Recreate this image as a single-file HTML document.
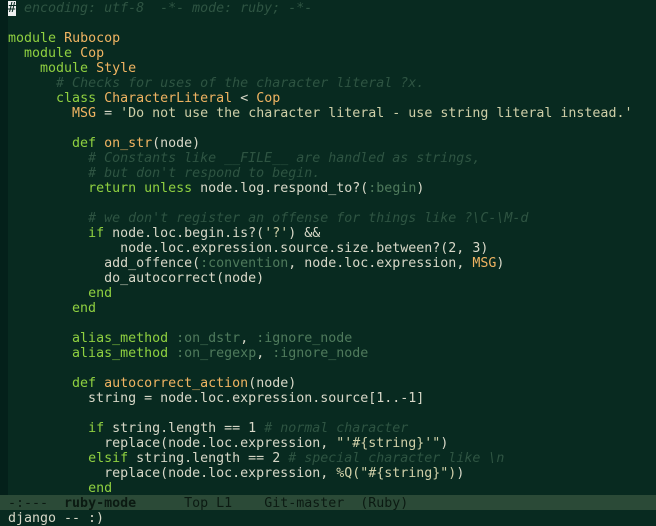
<!DOCTYPE html>
<html><head><meta charset="utf-8"><style>
html,body{margin:0;padding:0;width:656px;height:525px;overflow:hidden;background:#082a20;}
#fr{position:absolute;left:0;top:0;width:8px;height:495px;background:#04201a;}
pre{position:absolute;left:8px;top:1px;margin:0;font-family:"DejaVu Sans Mono","Liberation Mono",monospace;font-size:13.3px;line-height:15px;color:#d8d8c8;white-space:pre;}
.k{color:#8fd040}.f{color:#f0b462}.c{color:#2e5442;font-style:italic}.s{color:#cfcfa8}.y{color:#4f7a5c}
.cur{background:#f0f0f0;color:#082a20}
#ml{position:absolute;left:0;top:495px;width:656px;height:15px;background:#2b4a37;}
#ml pre{left:8px;top:1px;color:#0b1a12}
#mb{position:absolute;left:8px;top:511px;}
</style></head><body>
<div id="fr"></div>
<pre><span class="cur">#</span><span class="c"> encoding: utf-8  -*- mode: ruby; -*-</span>

<span class="k">module</span> <span class="f">Rubocop</span>
  <span class="k">module</span> <span class="f">Cop</span>
    <span class="k">module</span> <span class="f">Style</span>
      <span class="c"># Checks for uses of the character literal ?x.</span>
      <span class="k">class</span> <span class="f">CharacterLiteral</span> &lt; <span class="f">Cop</span>
        <span class="f">MSG</span> = <span class="s">'Do not use the character literal - use string literal instead.'</span>

        <span class="k">def</span> <span class="f">on_str</span>(node)
          <span class="c"># Constants like __FILE__ are handled as strings,</span>
          <span class="c"># but don't respond to begin.</span>
          <span class="k">return</span> <span class="k">unless</span> node.log.respond_to?(<span class="y">:begin</span>)

          <span class="c"># we don't register an offense for things like ?\C-\M-d</span>
          <span class="k">if</span> node.loc.begin.is?(<span class="s">'?'</span>) &amp;&amp;
              node.loc.expression.source.size.between?(2, 3)
            add_offence(<span class="y">:convention</span>, node.loc.expression, <span class="f">MSG</span>)
            do_autocorrect(node)
          <span class="k">end</span>
        <span class="k">end</span>

        <span class="k">alias_method</span> <span class="y">:on_dstr</span>, <span class="y">:ignore_node</span>
        <span class="k">alias_method</span> <span class="y">:on_regexp</span>, <span class="y">:ignore_node</span>

        <span class="k">def</span> <span class="f">autocorrect_action</span>(node)
          string = node.loc.expression.source[1..-1]

          <span class="k">if</span> string.length == 1 <span class="c"># normal character</span>
            replace(node.loc.expression, <span class="s">"'#{string}'"</span>)
          <span class="k">elsif</span> string.length == 2 <span class="c"># special character like \n</span>
            replace(node.loc.expression, <span class="s">%Q("#{string}")</span>)
          <span class="k">end</span></pre>
<div id="ml"><pre>-:---  <b>ruby-mode</b>      Top L1    Git-master  (Ruby)</pre></div>
<pre id="mb">django -- :)</pre>
</body></html>
